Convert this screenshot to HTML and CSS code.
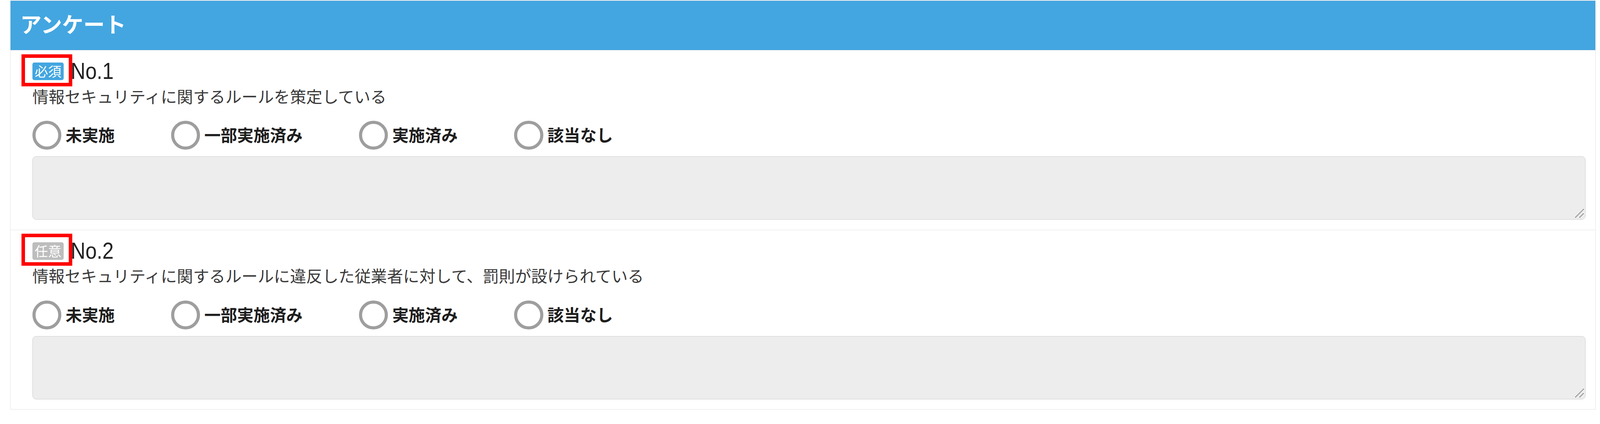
FILE: index.html
```html
<!DOCTYPE html>
<html lang="ja">
<head>
<meta charset="utf-8">
<title>アンケート</title>
<link rel="stylesheet" href="styles.css">
</head>
<body>
<div class="survey">
  <div class="survey-head">アンケート</div>

  <section class="q">
    <div class="q-title">
      <span class="badge badge-req">必須</span>
      <span class="q-no">No.1</span>
      <span class="mark"></span>
    </div>
    <p class="q-text">情報セキュリティに関するルールを策定している</p>
    <div class="options">
      <label class="opt"><span class="radio"></span><span class="opt-label">未実施</span></label>
      <label class="opt"><span class="radio"></span><span class="opt-label">一部実施済み</span></label>
      <label class="opt"><span class="radio"></span><span class="opt-label">実施済み</span></label>
      <label class="opt"><span class="radio"></span><span class="opt-label">該当なし</span></label>
    </div>
    <div class="memo">
      <svg class="grip" width="26" height="26" viewBox="0 0 26 26"><line x1="2" y1="24" x2="24" y2="2"/><line x1="13" y1="24" x2="24" y2="13"/></svg>
    </div>
  </section>

  <section class="q">
    <div class="q-title">
      <span class="badge badge-opt">任意</span>
      <span class="q-no">No.2</span>
      <span class="mark"></span>
    </div>
    <p class="q-text">情報セキュリティに関するルールに違反した従業者に対して、罰則が設けられている</p>
    <div class="options">
      <label class="opt"><span class="radio"></span><span class="opt-label">未実施</span></label>
      <label class="opt"><span class="radio"></span><span class="opt-label">一部実施済み</span></label>
      <label class="opt"><span class="radio"></span><span class="opt-label">実施済み</span></label>
      <label class="opt"><span class="radio"></span><span class="opt-label">該当なし</span></label>
    </div>
    <div class="memo">
      <svg class="grip" width="26" height="26" viewBox="0 0 26 26"><line x1="2" y1="24" x2="24" y2="2"/><line x1="13" y1="24" x2="24" y2="13"/></svg>
    </div>
  </section>
</div>
</body>
</html>
```

FILE: styles.css
```css
html, body {
  margin: 0;
  padding: 0;
  background: #ffffff;
}

body {
  font-family: "Noto Sans CJK JP", "Noto Sans", sans-serif;
  color: #333333;
  zoom: 0.976;
}

.survey {
  margin: 1px 11px 0 27px;
  border: 2px solid #e4e4e4;
  background: #ffffff;
}

.survey-head {
  height: 129px;
  box-sizing: border-box;
  display: flex;
  align-items: center;
  padding: 0 0 10px 24px;
  background: #43a6e1;
  border: 1px solid #3a9dd9;
  color: #ffffff;
  font-size: 56px;
  font-weight: 700;
  line-height: 1;
}

.q {
  border-top: 2px solid #e4e4e4;
  padding: 22px 26px 26px 57px;
}

.q-title {
  position: relative;
  display: flex;
  align-items: center;
  gap: 18px;
  height: 66px;
}

.badge {
  display: flex;
  align-items: center;
  justify-content: center;
  width: 82px;
  height: 46px;
  border-radius: 5px;
  color: #ffffff;
  font-size: 35px;
  line-height: 1;
  padding-bottom: 2px;
  box-sizing: border-box;
}

.badge-req {
  background: #43a6e1;
}

.badge-opt {
  background: #bdbdbd;
}

.q-no {
  font-family: "Liberation Sans", Arial, sans-serif;
  font-size: 60px;
  line-height: 66px;
  color: #222222;
  transform: scaleX(0.89);
  transform-origin: left center;
}

.mark {
  position: absolute;
  left: -29px;
  top: -12px;
  width: 134px;
  height: 84px;
  box-sizing: border-box;
  border: 10px solid #ff0000;
}

.q-text {
  margin: 6px 0 0 0;
  font-size: 42.4px;
  line-height: 50px;
  color: #3a3a3a;
}

.options {
  display: flex;
  gap: 148px;
  margin-top: 40px;
}

.opt {
  display: flex;
  align-items: center;
  gap: 11px;
  height: 77px;
}

.radio {
  width: 76px;
  height: 76px;
  box-sizing: border-box;
  border: 9px solid #9e9e9e;
  border-radius: 50%;
  background: #ffffff;
}

.opt-label {
  font-size: 43px;
  font-weight: 700;
  line-height: 70px;
  padding-bottom: 4px;
  color: #1e1e1e;
}

.memo {
  position: relative;
  margin-top: 17px;
  height: 166px;
  box-sizing: border-box;
  background: #ededed;
  border: 2px solid #cdcdcd;
  border-radius: 10px;
}

.grip {
  position: absolute;
  right: 2px;
  bottom: 3px;
}

.grip line {
  stroke: #5a5a5a;
  stroke-width: 2.2;
  stroke-dasharray: 2.5 1.5;
}
```
